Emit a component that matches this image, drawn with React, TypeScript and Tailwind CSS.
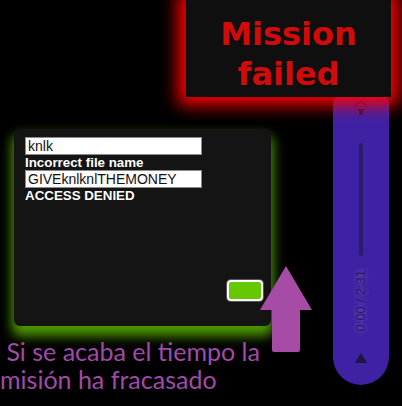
import React from "react";

const SpeakerIcon: React.FC = () => (
  <svg width="16" height="16" viewBox="0 0 16 16" className="block">
    <path d="M3 7 A5 5 0 0 1 13 7" fill="none" stroke="#3a1238" strokeWidth="1.6" />
    <path d="M4.5 9 H11.5 L9.5 12 V15 H6.5 V12 Z" fill="#3a1238" />
  </svg>
);

const UpArrow: React.FC = () => (
  <svg width="54" height="88" viewBox="0 0 54 88" className="block">
    <path d="M26 0 L52 44 L40 44 L40 84 Q40 86 38 86 L14 86 Q12 86 12 84 L12 44 L0 44 Z" fill="#a64ca6" />
  </svg>
);

const App: React.FC = () => {
  return (
    <div className="relative w-[402px] h-[406px] bg-black overflow-hidden">
      <div className="flex justify-end pr-[11px]">
        <div className="relative z-10 w-[205px] h-[97px] bg-[#0f0f0f] shadow-[0_0_16px_8px_#ff0000] flex flex-col items-center pt-[14px]">
          <p className="font-['DejaVu_Sans',sans-serif] font-bold text-[32px] leading-[40px] text-[#d20a0a] text-center">
            Mission
            <br />
            failed
          </p>
        </div>
      </div>

      <div className="flex -mt-[4px]">
        <div className="flex flex-col">
          <div className="ml-[14px] mt-[36px] w-[257px] h-[197px] bg-[#141414] rounded-[6px] shadow-[0_8px_12px_2px_#4f9a00] pt-[8px] pl-[11px] relative font-['Liberation_Sans',Arial,sans-serif] text-[13.33px]">
            <div className="w-[177px] h-[18px] bg-white border border-[#8a8a8a] px-[2px] leading-[16px] text-[14px] text-[#111]">knlk</div>
            <p className="font-bold text-white leading-[15px]">Incorrect file name</p>
            <div className="w-[177px] h-[18px] bg-white border border-[#8a8a8a] px-[2px] leading-[16px] text-[14px] text-[#111]">GIVEknlknlTHEMONEY</div>
            <p className="font-bold text-white leading-[15px]">ACCESS DENIED</p>
            <div className="absolute right-[8px] bottom-[25px] w-[36px] h-[21px] rounded-[4px] border-2 border-white bg-[#66c800] shadow-[0_0_0_1px_#555]" />
          </div>
          <p className="mt-[11px] font-['Lato',sans-serif] text-[25px] leading-[28px] text-[#a24aaa] whitespace-pre">
            {" Si se acaba el tiempo la"}
            <br />
            {"misión ha fracasado"}
          </p>
        </div>

        <div className="ml-auto mr-[13px] w-[56px] h-[292px] bg-[#3f21a3] rounded-t-[10px] rounded-b-[28px] flex flex-col items-center pt-[7px]">
          <SpeakerIcon />
          <div className="mt-[27px] w-[4px] h-[113px] rounded-full bg-[#2b1c6b]" />
          <div className="mt-[7px] w-[16px] h-[75px] flex items-center justify-center">
            <span className="[writing-mode:vertical-rl] rotate-180 font-['Liberation_Sans',Arial,sans-serif] text-[13px] text-[#2a1a5e] [text-shadow:0_0_5px_rgba(180,160,255,0.6)] whitespace-nowrap">
              0:00 / 2:31
            </span>
          </div>
          <div className="mt-[15px] w-0 h-0 border-l-[6px] border-r-[6px] border-b-[10px] border-l-transparent border-r-transparent border-b-[#1f1640]" />
        </div>
      </div>

      <div className="absolute left-[260px] top-[266px]">
        <UpArrow />
      </div>
    </div>
  );
};

export default App;
